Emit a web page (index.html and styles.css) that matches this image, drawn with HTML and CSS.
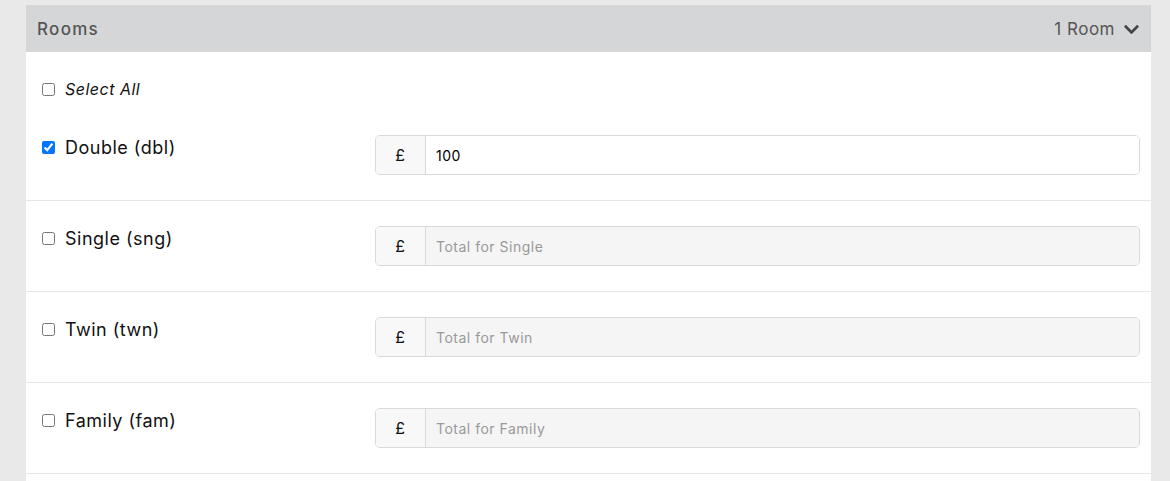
FILE: index.html
```html
<!DOCTYPE html>
<html lang="en">
<head>
    <meta charset="UTF-8">
    <meta name="viewport" content="width=device-width, initial-scale=1.0">
    <title>Rooms</title>
    <link rel="stylesheet" href="styles.css">
</head>
<body>

    <div class="panel">
        <div class="panel-heading">
            <span class="panel-title">Rooms</span>
            <span class="room-count">1 Room
                <svg class="chevron" viewBox="0 0 448 512" width="17" height="17"><path d="M207 381.5L12.7 187.1c-9.4-9.4-9.4-24.6 0-33.9l22.7-22.7c9.4-9.4 24.5-9.4 33.9 0L224 284.5l154.7-154c9.4-9.3 24.5-9.3 33.9 0l22.7 22.7c9.4 9.4 9.4 24.6 0 33.9L241 381.5c-9.4 9.4-24.6 9.4-34 0z" fill="currentColor"/></svg>
            </span>
        </div>

        <div class="panel-body">
            <label class="select-all">
                <input type="checkbox">
                <em>Select All</em>
            </label>

            <div class="room-row">
                <label class="room-name"><input type="checkbox" checked> Double (dbl)</label>
                <div class="input-group">
                    <span class="currency">£</span>
                    <input type="text" class="price" value="100" placeholder="Total for Double">
                </div>
            </div>

            <div class="room-row">
                <label class="room-name"><input type="checkbox"> Single (sng)</label>
                <div class="input-group">
                    <span class="currency">£</span>
                    <input type="text" class="price" placeholder="Total for Single" readonly>
                </div>
            </div>

            <div class="room-row">
                <label class="room-name"><input type="checkbox"> Twin (twn)</label>
                <div class="input-group">
                    <span class="currency">£</span>
                    <input type="text" class="price" placeholder="Total for Twin" readonly>
                </div>
            </div>

            <div class="room-row">
                <label class="room-name"><input type="checkbox"> Family (fam)</label>
                <div class="input-group">
                    <span class="currency">£</span>
                    <input type="text" class="price" placeholder="Total for Family" readonly>
                </div>
            </div>
        </div>
    </div>

</body>
</html>
```

FILE: styles.css
```css
body {
    margin: 0;
    padding-top: 5px;
    background-color: #e9e9e9;
    font-family: Inter, "Open Sans", sans-serif;
    letter-spacing: 0.5px;
    color: #111;
}
.panel {
    width: 1125px;
    margin-left: 26px;
    background-color: #fff;
}
.panel-heading {
    display: flex;
    justify-content: space-between;
    align-items: center;
    height: 47px;
    padding: 0 11px;
    background-color: #d5d6d8;
    color: #555;
    font-size: 17px;
}
.panel-title {
    font-weight: 500;
    letter-spacing: 1.3px;
}
.room-count {
    display: flex;
    align-items: center;
    gap: 8px;
}
.chevron {
    color: #444;
    margin-top: 1px;
}
.panel-body {
    padding: 0 11px 20px;
}
.select-all {
    display: flex;
    align-items: center;
    gap: 10px;
    height: 18px;
    padding: 28px 0 12px 5px;
    font-size: 16px;
}
input[type="checkbox"] {
    width: 13px;
    height: 13px;
    margin: 0;
}
.room-row {
    display: flex;
    padding: 25px 11px 25px 16px;
    border-bottom: 1px solid #e6e6e6;
    margin: 0 -11px;
}
.room-name {
    display: flex;
    align-items: center;
    gap: 10px;
    width: 333px;
    height: 24px;
    font-size: 18px;
    align-self: flex-start;
}
.input-group {
    display: flex;
    flex: 1;
    height: 40px;
    border: 1px solid #d9d9d9;
    border-radius: 5px;
    overflow: hidden;
    box-sizing: border-box;
}
.currency {
    width: 49px;
    display: flex;
    align-items: center;
    justify-content: center;
    background-color: #f8f8f8;
    border-right: 1px solid #d9d9d9;
    font-size: 16px;
}
.price {
    flex: 1;
    border: none;
    padding: 0 10px;
    font-family: inherit;
    font-size: 14px;
    letter-spacing: 0.5px;
    color: #000;
    outline: none;
}
.price[readonly] {
    background-color: #f5f5f5;
}
.price::placeholder {
    color: #999;
}
```
